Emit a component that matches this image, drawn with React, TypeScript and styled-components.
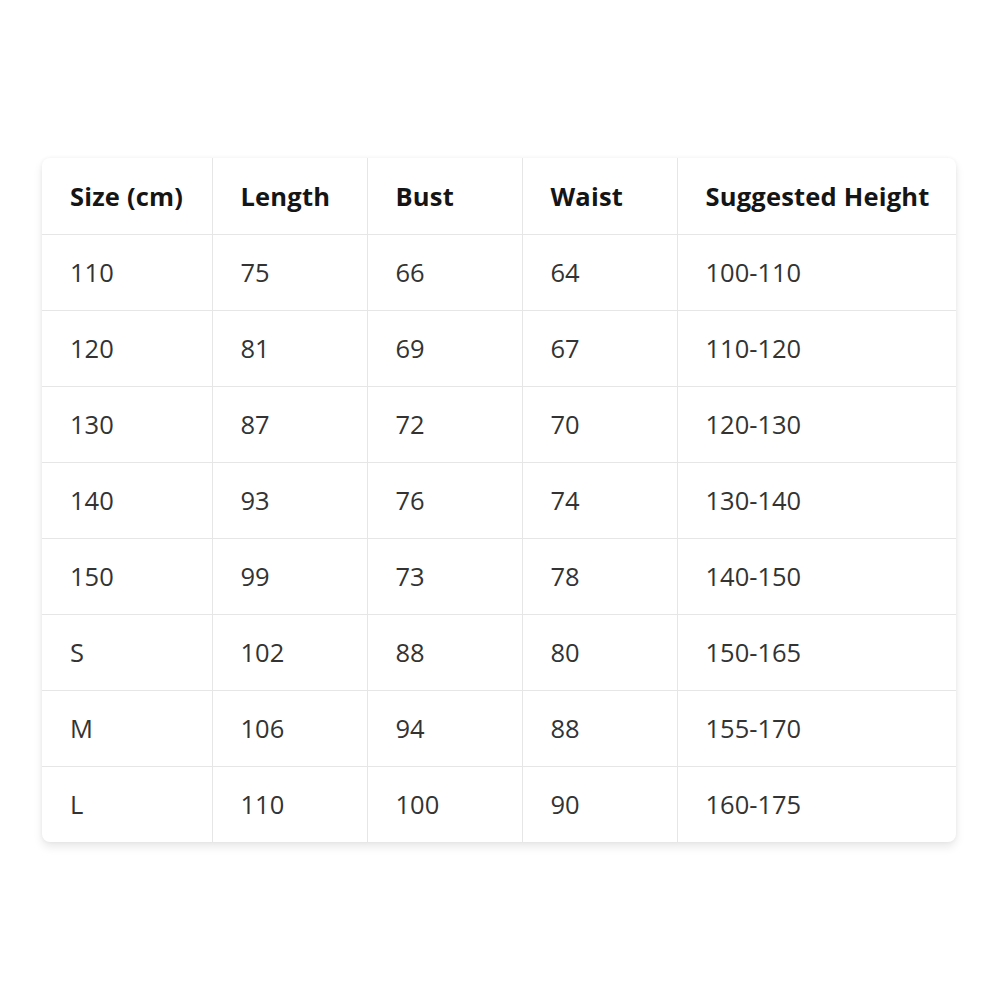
import React from "react";
import styled, { createGlobalStyle } from "styled-components";

const Global = createGlobalStyle`
  html, body { margin: 0; padding: 0; background: #ffffff; }
  body { font-family: "Open Sans", "Noto Sans", sans-serif; }
`;

const Page = styled.div`
  width: 1000px;
  height: 1000px;
  box-sizing: border-box;
  padding-top: 158px;
  padding-left: 42px;
`;

const Card = styled.div`
  width: 914px;
  background: #fff;
  border-radius: 8px;
  box-shadow: 0 5px 10px rgba(0, 0, 0, 0.09), 0 0 4px rgba(0, 0, 0, 0.05);
  overflow: hidden;
`;

const Table = styled.table`
  width: 100%;
  border-collapse: collapse;
  table-layout: fixed;
`;

const Th = styled.th<{ $w: number }>`
  width: ${(p) => p.$w}px;
  height: 76px;
  box-sizing: border-box;
  padding: 0 0 0 28px;
  text-align: left;
  font-size: 25.5px;
  font-weight: 700;
  letter-spacing: 0.2px;
  color: #151515;
  white-space: nowrap;
  border-bottom: 1px solid #e6e6e6;
  border-right: 1px solid #e6e6e6;
  &:last-child { border-right: none; }
`;

const Td = styled.td`
  height: 76px;
  box-sizing: border-box;
  padding: 0 0 0 28px;
  font-size: 25.5px;
  font-weight: 400;
  color: #333;
  border-bottom: 1px solid #e6e6e6;
  border-right: 1px solid #e6e6e6;
  &:last-child { border-right: none; }
`;

const Tr = styled.tr`
  &:last-child td { border-bottom: none; }
`;

const cols = [
  { label: "Size (cm)", w: 170 },
  { label: "Length", w: 155 },
  { label: "Bust", w: 155 },
  { label: "Waist", w: 155 },
  { label: "Suggested Height", w: 279 },
];

const rows = [
  ["110", "75", "66", "64", "100-110"],
  ["120", "81", "69", "67", "110-120"],
  ["130", "87", "72", "70", "120-130"],
  ["140", "93", "76", "74", "130-140"],
  ["150", "99", "73", "78", "140-150"],
  ["S", "102", "88", "80", "150-165"],
  ["M", "106", "94", "88", "155-170"],
  ["L", "110", "100", "90", "160-175"],
];

export default function App() {
  return (
    <>
      <Global />
      <Page>
        <Card>
          <Table>
            <thead>
              <tr>
                {cols.map((c) => (
                  <Th key={c.label} $w={c.w}>
                    {c.label}
                  </Th>
                ))}
              </tr>
            </thead>
            <tbody>
              {rows.map((r, i) => (
                <Tr key={i}>
                  {r.map((v, j) => (
                    <Td key={j}>{v}</Td>
                  ))}
                </Tr>
              ))}
            </tbody>
          </Table>
        </Card>
      </Page>
    </>
  );
}
